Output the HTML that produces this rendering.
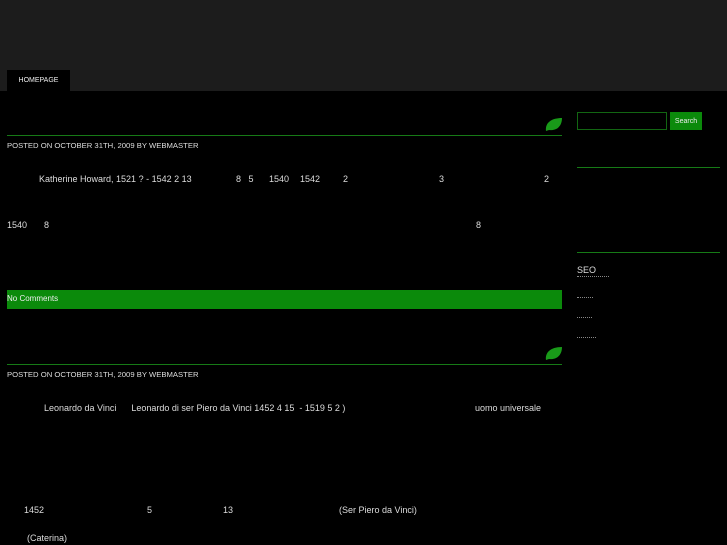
<!DOCTYPE html><html><head><style>
body{margin:0;width:727px;height:545px;background:#000;font-family:"Liberation Sans",sans-serif;color:#ddd;position:relative;overflow:hidden}
.a{position:absolute;white-space:nowrap}
.hd{position:absolute;left:0;top:0;width:727px;height:91px;background:#1c1c1c}
.tab{position:absolute;left:7px;top:70px;width:63px;height:21px;background:#000;font-size:7px;color:#eee;text-align:center;line-height:22px}
.ln{position:absolute;height:1px;background:#167a16}
.p{font-size:7.7px;color:#ddd}
.t{font-size:9px;color:#ddd}
</style></head><body>
<div class="hd"></div><div class="tab">HOMEPAGE</div>
<svg class="a" style="left:545px;top:116px" width="18" height="16" viewBox="0 0 18 16"><path d="M1 15C0 8 5 2 17 2C17 10 12 15 4 14L1 15Z" fill="#199a19"/></svg>
<div class="ln" style="left:7px;top:135px;width:555px"></div>
<div class="a p" style="left:7px;top:141px">POSTED ON OCTOBER 31TH, 2009 BY WEBMASTER</div>
<div class="a t" style="left:39px;top:174px">Katherine Howard, 1521 ? - 1542 2 13</div>
<div class="a t" style="left:236px;top:174px">8&nbsp;&nbsp;&nbsp;5</div>
<div class="a t" style="left:269px;top:174px">1540</div>
<div class="a t" style="left:300px;top:174px">1542</div>
<div class="a t" style="left:343px;top:174px">2</div>
<div class="a t" style="left:439px;top:174px">3</div>
<div class="a t" style="left:544px;top:174px">2</div>
<div class="a t" style="left:7px;top:220px">1540</div>
<div class="a t" style="left:44px;top:220px">8</div>
<div class="a t" style="left:476px;top:220px">8</div>
<div class="a" style="left:7px;top:290px;width:555px;height:19px;background:#0b8a0b;font-size:8px;line-height:18px;color:#eee">No Comments</div>
<svg class="a" style="left:545px;top:345px" width="18" height="16" viewBox="0 0 18 16"><path d="M1 15C0 8 5 2 17 2C17 10 12 15 4 14L1 15Z" fill="#199a19"/></svg>
<div class="ln" style="left:7px;top:364px;width:555px"></div>
<div class="a p" style="left:7px;top:370px">POSTED ON OCTOBER 31TH, 2009 BY WEBMASTER</div>
<div class="a t" style="left:44px;top:403px">Leonardo da Vinci&nbsp;&nbsp;&nbsp;&nbsp;&nbsp;&nbsp;Leonardo di ser Piero da Vinci 1452 4 15&nbsp;&nbsp;- 1519 5 2 )</div>
<div class="a t" style="left:475px;top:403px">uomo universale</div>
<div class="a t" style="left:24px;top:505px">1452</div>
<div class="a t" style="left:147px;top:505px">5</div>
<div class="a t" style="left:223px;top:505px">13</div>
<div class="a t" style="left:339px;top:505px">(Ser Piero da Vinci)</div>
<div class="a t" style="left:27px;top:533px">(Caterina)</div>
<div class="a" style="left:577px;top:112px;width:90px;height:18px;border:1px solid #126612;box-sizing:border-box"></div>
<div class="a" style="left:670px;top:112px;width:32px;height:18px;background:#0b8a0b;font-size:7px;color:#eee;text-align:center;line-height:19px">Search</div>
<div class="ln" style="left:577px;top:167px;width:143px"></div>
<div class="ln" style="left:577px;top:252px;width:143px"></div>
<div class="a" style="left:577px;top:265px;font-size:9px;color:#ddd">SEO</div>
<div class="a" style="left:577px;top:276px;width:32px;border-top:1px dotted #888"></div>
<div class="a" style="left:577px;top:297px;width:16px;border-top:1px dotted #888"></div>
<div class="a" style="left:577px;top:317px;width:15px;border-top:1px dotted #888"></div>
<div class="a" style="left:577px;top:337px;width:19px;border-top:1px dotted #888"></div>
</body></html>
